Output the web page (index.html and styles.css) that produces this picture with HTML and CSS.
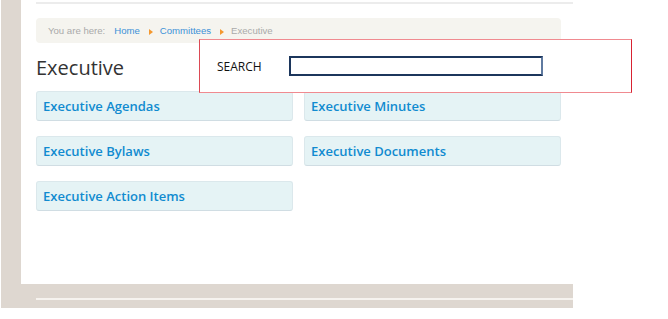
FILE: index.html
```html
<!DOCTYPE html>
<html lang="en">
<head>
    <meta charset="UTF-8">
    <meta name="viewport" content="width=device-width, initial-scale=1.0">
    <title>Executive</title>
    <link rel="stylesheet" href="styles.css">
</head>
<body>
    <div class="page">
        <div class="card">
            <div class="top-rule"></div>

            <div class="breadcrumb">
                <span class="crumb-label">You are here:</span>
                <a href="#" class="crumb-link">Home</a>
                <span class="crumb-sep"></span>
                <a href="#" class="crumb-link">Committees</a>
                <span class="crumb-sep"></span>
                <span class="crumb-current">Executive</span>
            </div>

            <h1 class="page-title">Executive</h1>

            <div class="link-grid">
                <a href="#" class="link-box">Executive Agendas</a>
                <a href="#" class="link-box">Executive Minutes</a>
                <a href="#" class="link-box">Executive Bylaws</a>
                <a href="#" class="link-box">Executive Documents</a>
                <a href="#" class="link-box">Executive Action Items</a>
            </div>
        </div>
        <div class="footer-band">
            <div class="footer-rule"></div>
        </div>
    </div>

    <!-- search overlay -->
    <div class="search-box">
        <span class="search-label">SEARCH</span>
        <input type="text" class="search-input">
    </div>
</body>
</html>
```

FILE: styles.css
```css
body {
    margin: 0;
    background: #fff;
    font-family: 'Open Sans', sans-serif;
}

.page {
    width: 572px;
    margin-left: 1px;
    background: #ded7d0;
}

.card {
    margin-left: 20px;
    height: 284px;
    background: #fff;
    padding: 2px 12px 0 15px;
    box-sizing: border-box;
}

.top-rule {
    height: 2px;
    background: #ececec;
    margin-right: -12px;
}

.breadcrumb {
    margin-top: 14px;
    height: 25px;
    background: #f5f4ef;
    border-radius: 4px;
    display: flex;
    align-items: center;
    padding-left: 12px;
    font-family: 'Liberation Sans', Arial, sans-serif;
    font-size: 9.6px;
}

.crumb-label {
    color: #aaa;
    margin-right: 9px;
}

.crumb-link {
    color: #3d92d8;
    text-decoration: none;
}

.crumb-sep {
    width: 0;
    height: 0;
    border-left: 4px solid #f4982f;
    border-top: 3px solid transparent;
    border-bottom: 3px solid transparent;
    margin: 3px 7px 0 9px;
}

.crumb-current {
    color: #aaa;
}

.page-title {
    margin: 10px 0 8px;
    font-size: 20px;
    line-height: 30px;
    font-weight: 400;
    color: #333;
}

.link-grid {
    display: grid;
    grid-template-columns: 257px 257px;
    column-gap: 11px;
    row-gap: 15px;
}

.link-box {
    display: block;
    height: 30px;
    box-sizing: border-box;
    line-height: 28px;
    padding-left: 6px;
    background: #e5f3f5;
    border: 1px solid #dbe8ec;
    border-bottom-color: #d0dde3;
    border-radius: 3px;
    color: #118bd0;
    font-size: 13px;
    font-weight: 600;
    text-decoration: none;
}

.footer-band {
    height: 24px;
    padding-top: 14px;
    box-sizing: border-box;
}

.footer-rule {
    margin-left: 35px;
    height: 2px;
    background: #f6f3ef;
}

.search-box {
    position: absolute;
    left: 199px;
    top: 39px;
    width: 433px;
    height: 54px;
    box-sizing: border-box;
    border: 1px solid #f08a90;
    border-left-color: #dc4a55;
    border-right-color: #d82231;
    background: #fff;
    display: flex;
    align-items: center;
    padding-left: 17px;
}

.search-label {
    font-size: 12px;
    color: #111;
    margin-right: 27px;
}

.search-input {
    width: 254px;
    height: 20px;
    box-sizing: border-box;
    margin: 0;
    padding: 0;
    border: 2px solid #1c365c;
    border-right-color: #5f7aa0;
    background: #fff;
    outline: none;
}
```
